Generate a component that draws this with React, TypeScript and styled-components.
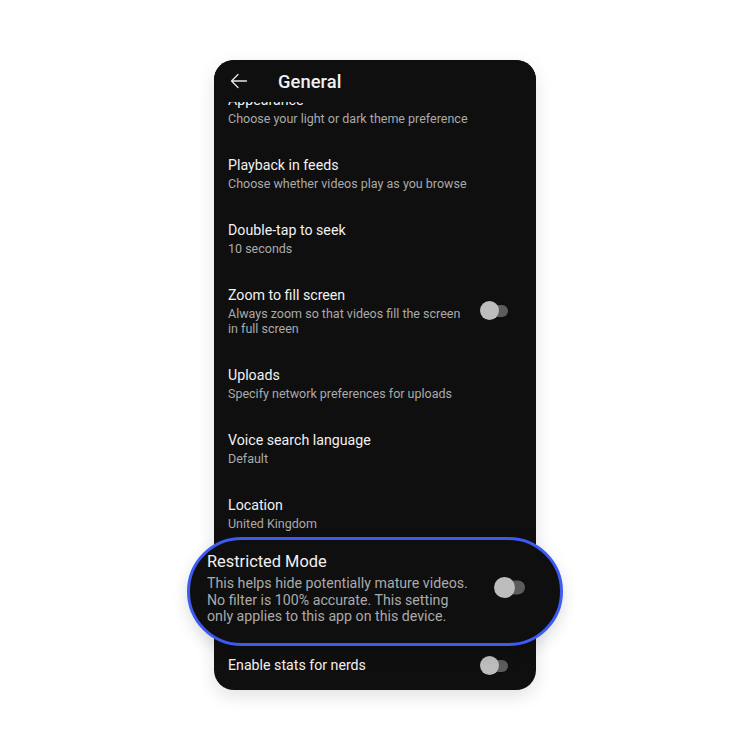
import { createGlobalStyle, styled } from "styled-components";

const GlobalStyle = createGlobalStyle`
    html, body {
        margin: 0;
        padding: 0;
        background: #ffffff;
        font-family: Roboto, "Noto Sans", Arial, sans-serif;
    }
`;

const Page = styled.div`
    display: flex;
    justify-content: center;
    align-items: center;
    width: 750px;
    height: 750px;
`;

const Phone = styled.div`
    display: flex;
    flex-direction: column;
    width: 322px;
    height: 630px;
    background-color: #0f0f0f;
    border-radius: 20px;
    box-shadow: 0 6px 18px rgba(0, 0, 0, 0.12);
`;

const Header = styled.div`
    position: relative;
    z-index: 2;
    display: flex;
    align-items: center;
    gap: 30px;
    height: 42px;
    padding: 2px 0 0 16px;
    box-sizing: border-box;
    background-color: #0f0f0f;
    border-radius: 20px 20px 0 0;
    color: #f1f1f1;

    svg {
        margin-top: -2px;
    }

    h1 {
        margin: 0;
        font-size: 18.3px;
        font-weight: 500;
        letter-spacing: 0.1px;
    }
`;

const List = styled.div`
    display: flex;
    flex-direction: column;
`;

const Row = styled.div<{ $first?: boolean }>`
    display: flex;
    align-items: center;
    justify-content: space-between;
    padding: 15px 28px 14px 14px;
    margin-top: ${(p) => (p.$first ? "-26.5px" : "0")};
`;

const Texts = styled.div`
    display: flex;
    flex-direction: column;
`;

const Title = styled.div`
    color: #f1f1f1;
    font-size: 14.2px;
    line-height: 21px;
`;

const Sub = styled.div`
    color: #aaaaaa;
    font-size: 12.5px;
    line-height: 15px;
`;

const Slot = styled.div`
    height: 95px;
    display: flex;
    flex-direction: column;
`;

const Highlight = styled.div`
    position: relative;
    z-index: 1;
    flex: none;
    display: flex;
    align-items: flex-start;
    justify-content: space-between;
    height: 109.5px;
    margin: -8.2px -27px 0;
    padding: 9.35px 35px 0 17px;
    box-sizing: border-box;
    background-color: #0f0f0f;
    border: 3px solid #3d5af1;
    border-radius: 56px;
    box-shadow: 0 6px 16px rgba(0, 0, 0, 0.14);
`;

const BigTitle = styled.div`
    color: #f1f1f1;
    font-size: 16.4px;
    line-height: 26px;
`;

const BigSub = styled.div`
    color: #aaaaaa;
    font-size: 14.2px;
    line-height: 16.5px;
    width: 268px;
`;

const Toggle = styled.div<{ $scale?: number; $offset?: number }>`
    position: relative;
    flex: none;
    width: ${(p) => 28 * (p.$scale ?? 1)}px;
    height: ${(p) => 19 * (p.$scale ?? 1)}px;
    margin-top: ${(p) => p.$offset ?? 0}px;
`;

const Track = styled.div<{ $scale?: number }>`
    position: absolute;
    right: 0;
    top: 50%;
    transform: translateY(-50%);
    width: ${(p) => 24 * (p.$scale ?? 1)}px;
    height: ${(p) => 12 * (p.$scale ?? 1)}px;
    border-radius: 8px;
    background-color: #5c5c5c;
`;

const Knob = styled.div<{ $scale?: number }>`
    position: absolute;
    left: 0;
    top: 0;
    width: ${(p) => 19 * (p.$scale ?? 1)}px;
    height: ${(p) => 19 * (p.$scale ?? 1)}px;
    border-radius: 50%;
    background-color: #bdbdbd;
`;

const Switch = ({ scale, offset }: { scale?: number; offset?: number }) => (
    <Toggle $scale={scale} $offset={offset}>
        <Track $scale={scale} />
        <Knob $scale={scale} />
    </Toggle>
);

const BackArrow = () => (
    <svg width="18" height="18" viewBox="0 0 18 18" fill="none" stroke="#e6e6e6" strokeWidth="1.3" strokeLinecap="round" strokeLinejoin="round">
        <path d="M16.5 9H1.5M8 2.5L1.5 9L8 15.5" />
    </svg>
);

const items = [
    { title: "Appearance", sub: ["Choose your light or dark theme preference"] },
    { title: "Playback in feeds", sub: ["Choose whether videos play as you browse"] },
    { title: "Double-tap to seek", sub: ["10 seconds"] },
    { title: "Zoom to fill screen", sub: ["Always zoom so that videos fill the screen", "in full screen"], toggle: true },
    { title: "Uploads", sub: ["Specify network preferences for uploads"] },
    { title: "Voice search language", sub: ["Default"] },
    { title: "Location", sub: ["United Kingdom"] },
];

const App = () => {
    return <Page>
        <GlobalStyle />
        <Phone>
            <Header>
                <BackArrow />
                <h1>General</h1>
            </Header>
            <List>
                {items.map((item, i) => (
                    <Row key={item.title} $first={i === 0}>
                        <Texts>
                            <Title>{item.title}</Title>
                            {item.sub.map((s) => <Sub key={s}>{s}</Sub>)}
                        </Texts>
                        {item.toggle && <Switch />}
                    </Row>
                ))}
                <Slot>
                    <Highlight>
                        <Texts>
                            <BigTitle>Restricted Mode</BigTitle>
                            <BigSub>This helps hide potentially mature videos. No filter is 100% accurate. This setting only applies to this app on this device.</BigSub>
                        </Texts>
                        <Switch scale={1.1} offset={27.9} />
                    </Highlight>
                </Slot>
                <Row>
                    <Title>Enable stats for nerds</Title>
                    <Switch />
                </Row>
            </List>
        </Phone>
    </Page>
}

export default App;
